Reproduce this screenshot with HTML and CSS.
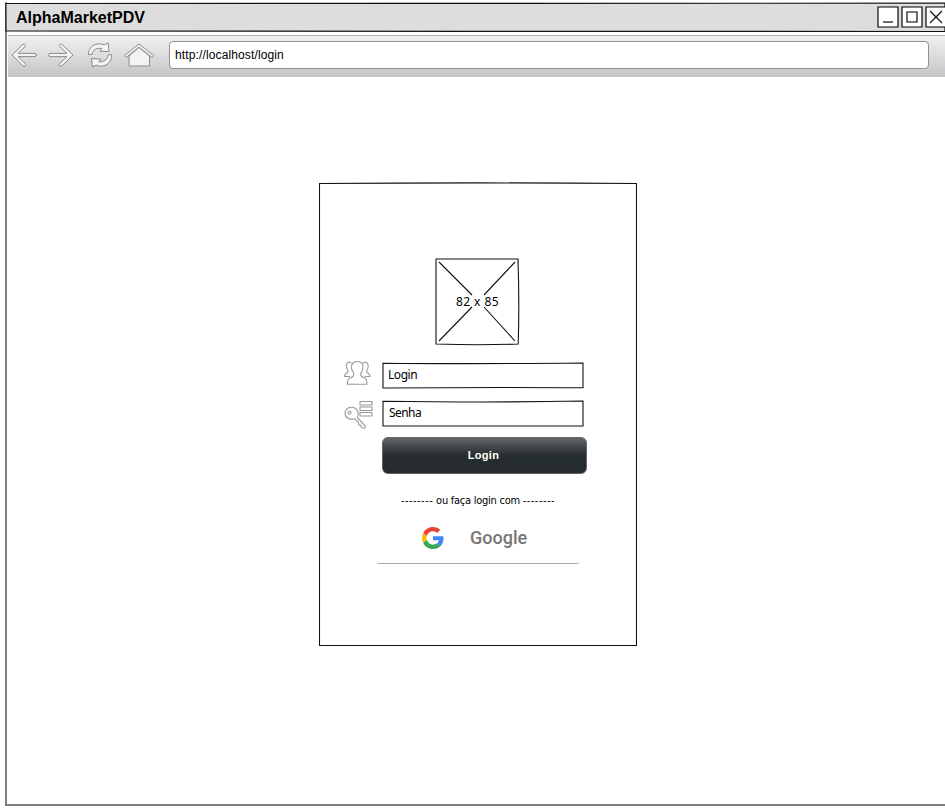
FILE: index.html
```html
<!DOCTYPE html>
<html lang="pt-BR">
<head>
<meta charset="utf-8">
<title>AlphaMarketPDV</title>
<link rel="stylesheet" href="styles.css">
</head>
<body>
<div class="window">
  <header class="titlebar">
    <svg class="sketch" width="940" height="31" viewBox="0 0 940 31"><path d="M.9 1.5Q300 .3 940 1.2V29.5Q700 28.7 470 29.4T1 28.9Z" fill="#ddd" stroke="#111" stroke-width="1.2"/></svg>
    <h1 class="title">AlphaMarketPDV</h1>
    <div class="controls">
      <svg width="22" height="22" viewBox="0 0 22 22"><path d="M1 1h20v20H1z" class="ctl box"/><path d="M6 16h10" class="ctl"/></svg>
      <svg width="22" height="22" viewBox="0 0 22 22"><path d="M1 1h20v20H1z" class="ctl box"/><path d="M6 6h10v10H6z" class="ctl"/></svg>
      <svg width="22" height="22" viewBox="0 0 22 22"><path d="M1 1h20v20H1z" class="ctl box"/><path d="M5 5l12 12M17 5L5 17" class="cross"/></svg>
    </div>
  </header>
  <nav class="toolbar">
    <svg class="navicons" width="146" height="28" viewBox="11 41 146 28">
      <g class="nav">
        <path d="M12 55l11-10.6q1.700-1 2.700.8 0 .8-.7 1.500l-7 6.700h17q1.300.1 1.300 1.600T35 56.600H18l7 6.700q1.500 1.300.2 2.500-1.200.9-2.300-.2z"/>
        <path d="M73 55L62 44.400q-1.700-1-2.700.8 0 .8.7 1.500l7 6.700H50q-1.300.1-1.300 1.600t1.300 1.600h17l-7 6.700q-1.500 1.300-.2 2.500 1.200.9 2.300-.2z"/>
        <path d="M88.500 54.500C88 47.500 95 41.500 104.200 44.700L108.200 43 109 51.500 99.800 51.300 101.800 48.600C97 47.500 92.500 49.500 92 54.500Z"/>
        <path d="M111.700 54.700C112 62.500 105 68.500 96.200 65.200L92.500 67 91.500 58.500 100.800 59.200 98.800 61.700C103.500 62.500 107.500 60 108.300 54.700Z"/>
        <path d="M129 56l10-8.500L149.500 56v10H129z"/>
        <path d="M124.500 55.500L139 44l14.700 11.500-1.500 2L139 47.200 126 57.500z"/>
      </g>
    </svg>
    <div class="address">http://localhost/login</div>
  </nav>
  <main class="page">
    <section class="panel">
      <svg class="sketch" width="318" height="464" viewBox="0 0 318 464"><path d="M.5 1.500Q158 .3 317.500 1.500V463.500H.5Z" class="ink"/></svg>
      <div class="placeholder">
        <svg class="sketch" width="85" height="88" viewBox="0 0 85 88"><path d="M1 1H83Q84.500 45 83.200 86Q45 87.500 1 86Z" class="ink"/><path d="M4 4l33 33M49 37L80 4M37 49L4 83M49 49l31 34" class="ink"/></svg>
        <span>82 x 85</span>
      </div>
      <form class="form">
        <div class="row">
          <svg class="icon" width="28" height="26" viewBox="343 360 28 26"><g class="line">
            <path d="M351.500 363.500C350 361 346.700 362 346.400 365.500C346.200 368 347 369.500 348 371C348.300 373 344.500 373 344.500 376.500H350"/>
            <path d="M363 363.500C364.500 361 367.900 362 368.200 365.500C368.400 368 367.600 369.500 366.600 371C366.300 373 370 373 370 376.500H364.500"/>
            <path d="M357.300 361.500c4.500 0 6 3 5.700 6.500-.2 2.500-1.300 4-2.200 5.500-.5 2.500.2 3.200 2.700 4 3 1 3.300 2.500 3.500 6.700h-19.500c0-4.200.5-5.700 3.500-6.700 2.500-.8 3.200-1.500 2.700-4-1-1.500-2-3-2.200-5.500-.3-3.500 1.300-6.500 5.800-6.500z"/>
          </g></svg>
          <div class="field"><svg class="sketch" width="202" height="27" viewBox="0 0 202 27"><path d="M1 1.200Q85 2.200 201 1V25.800Q120 25 1 26Z" class="ink"/></svg>Login</div>
        </div>
        <div class="row">
          <svg class="icon key" width="30" height="30" viewBox="343 400 30 30"><g class="line">
            <path d="M357.300 417.500l7.900 8.300q.7 1.700-.7 2.500l-3.200-.8-.3-2.200-2.300-.4-.2-2.500-3.700-3.600c-4.500 1.700-9.300-.7-9.700-5.200-.3-3.500 2.400-6.300 6-6.300 4.700-.1 7.500 3.200 7 7.200q-.1 1.500-.8 3z"/>
            <circle cx="349.500" cy="412.700" r="1.500"/>
            <path d="M360 401.500h12v3.500h-12zM360 407h12v3.500h-12zM360 412.500h12v3.500h-12z"/>
          </g></svg>
          <div class="field second"><svg class="sketch" width="202" height="27" viewBox="0 0 202 27"><path d="M1 1.200Q110 2.800 201 1V26H1Z" class="ink"/></svg>Senha</div>
        </div>
        <button class="submit" type="button">Login</button>
      </form>
      <p class="divider"><span class="dash">--------</span> ou faça login com <span class="dash">--------</span></p>
      <div class="google">
        <svg width="22" height="22" viewBox="0 0 48 48"><path fill="#EA4335" d="M24 9.500c3.540 0 6.710 1.220 9.210 3.600l6.850-6.850C35.900 2.380 30.470 0 24 0 14.620 0 6.510 5.380 2.560 13.220l7.980 6.190C12.430 13.720 17.740 9.500 24 9.500z"/><path fill="#4285F4" d="M46.980 24.550c0-1.570-.15-3.090-.38-4.550H24v9.020h12.940c-.58 2.960-2.260 5.480-4.780 7.180l7.730 6c4.510-4.180 7.090-10.360 7.090-17.650z"/><path fill="#FBBC05" d="M10.530 28.590A14.500 14.500 0 0 1 9.770 24c0-1.600.27-3.140.76-4.590l-7.980-6.190A23.900 23.900 0 0 0 0 24c0 3.880.92 7.540 2.560 10.780z"/><path fill="#34A853" d="M24 48c6.480 0 11.930-2.130 15.890-5.810l-7.730-6c-2.150 1.450-4.920 2.300-8.160 2.300-6.260 0-11.570-4.220-13.470-9.910l-7.980 6.190C6.510 42.620 14.620 48 24 48z"/></svg>
        <span>Google</span>
      </div>
    </section>
  </main>
</div>
</body>
</html>
```
FILE: styles.css
```css
* { box-sizing: border-box; }
body { margin: 0; background: #fff; overflow: hidden; color: #000; font-family: "Liberation Sans", Arial, sans-serif; }
svg { display: block; flex: none; }
.window { margin: 2px 0 0 5px; height: 804px; border-left: 2px solid #808080; border-bottom: 2px solid #808080; display: flex; flex-direction: column; }
.sketch { position: absolute; left: 0; top: 0; z-index: -1; }
.ink { fill: none; stroke: #111; stroke-width: 1.1; }
.line { fill: #fff; stroke: #999; stroke-width: 1.1; stroke-linejoin: round; }
.titlebar { position: relative; z-index: 0; height: 31px; margin-left: -2px; padding-left: 11px; display: flex; align-items: center; justify-content: space-between; flex: none; }
.title { margin: 0; font-size: 16px; line-height: 30px; font-weight: bold; }
.controls { display: flex; gap: 2px; margin-right: -1px; margin-top: -2px; }
.ctl { fill: none; stroke: #000; stroke-width: 1.15; }
.box { fill: #fff; }
.controls svg:last-child { margin-right: -1px; }
.cross { fill: none; stroke: #111; stroke-width: 1.2; }
.toolbar { height: 42px; margin: 2px 0 0 1px; border-top: 1px solid #b5b5b5; background: linear-gradient(#efeff0, #e0e0e2 40%, #c4c4c8); display: flex; align-items: center; flex: none; padding: 0 16px 3px 3px; }
.navicons { margin-top: 0; }
.nav { fill: #f3f3f4; stroke: #8b8b8d; stroke-width: 1; stroke-linejoin: round; }
.address { flex: 1; margin-left: 12px; height: 28px; border: 1px solid #999086; border-radius: 4px; background: #fff; padding-left: 5px; font-size: 12px; line-height: 26px; letter-spacing: .13px; }
.page { flex: 1; padding: 105px 0 0 312px; }
.panel { position: relative; z-index: 0; width: 318px; height: 464px; padding-top: 76px; }
.placeholder { position: relative; z-index: 0; width: 85px; height: 88px; margin-left: 116px; display: grid; place-items: center; font: 12px/14px "Noto Sans", sans-serif; letter-spacing: .4px; }
.form { padding: 15px 0 0 24px; }
.row { display: flex; height: 38px; }
.icon { margin-right: 11px; margin-top: -1px; }
.key { margin-right: 9px; margin-top: 1px; }
.field { position: relative; z-index: 0; width: 202px; height: 27px; margin-top: 1px; padding-left: 6px; font: 12px/26px "Noto Sans", sans-serif; letter-spacing: -.45px; }
.second { padding-left: 7px; letter-spacing: -.55px; }
.submit { display: block; width: 205px; height: 37px; margin: 0 0 0 39px; padding: 0 2px 1px 0; border: 1px solid #626668; border-radius: 6px; background: linear-gradient(#626769, #464b4d 22%, #262d2e 52%, #252b2c); color: #fff; font: bold 11px "Liberation Sans", Arial, sans-serif; letter-spacing: .3px; }
.divider { margin: 19px 0 0; text-align: center; white-space: nowrap; font: 11px/16px "DejaVu Sans Condensed", "DejaVu Sans", sans-serif; font-stretch: condensed; letter-spacing: -.25px; }
.dash { letter-spacing: .45px; }
.google { width: 202px; height: 50px; margin: 5px 0 0 58px; border-bottom: 1px solid #aaa; border-radius: 2px; display: flex; align-items: center; padding: 0 0 2px 45px; color: #757575; font: 500 18px/24px Roboto, sans-serif; }
.google span { margin-left: 26px; }
```
